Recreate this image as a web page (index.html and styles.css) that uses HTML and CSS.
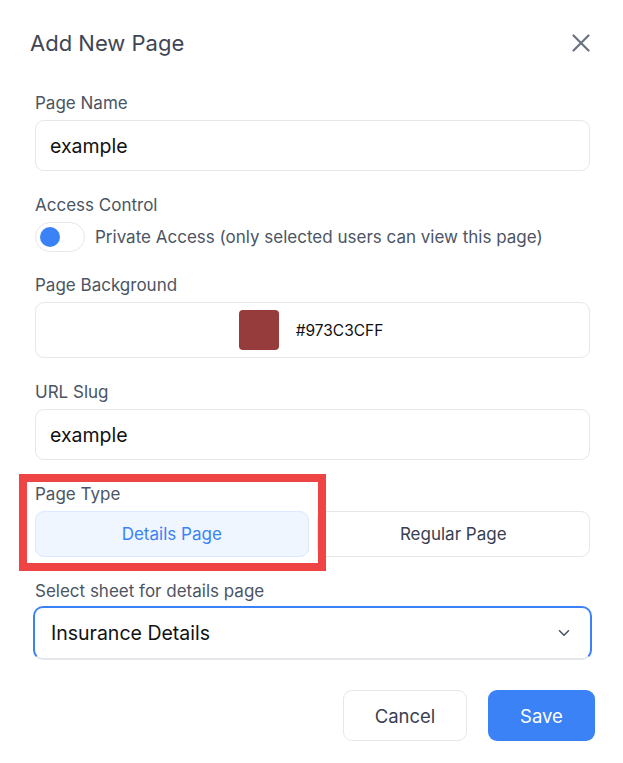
FILE: index.html
```html
<!DOCTYPE html>
<html lang="en">
<head>
<meta charset="utf-8">
<title>Add New Page</title>
<link rel="stylesheet" href="styles.css">
</head>
<body>
<div class="dialog">
  <div class="header">
    <h2 class="title">Add New Page</h2>
    <button class="close" aria-label="Close">
      <svg width="18" height="18" viewBox="0 0 18 18" fill="none" stroke="#6b7280" stroke-width="2.2" stroke-linecap="round"><path d="M1.5 1.5L16.5 16.5M16.5 1.5L1.5 16.5"/></svg>
    </button>
  </div>
  <div class="body">
    <div class="field">
      <label class="label">Page Name</label>
      <div class="input">example</div>
    </div>
    <div class="field">
      <label class="label">Access Control</label>
      <div class="toggle-row">
        <span class="toggle"><span class="knob"></span></span>
        <span class="toggle-text">Private Access (only selected users can view this page)</span>
      </div>
    </div>
    <div class="field field-bg">
      <label class="label">Page Background</label>
      <div class="color-box">
        <span class="swatch"></span>
        <span class="hex">#973C3CFF</span>
      </div>
    </div>
    <div class="field">
      <label class="label">URL Slug</label>
      <div class="input">example</div>
    </div>
    <div class="field">
      <label class="label">Page Type</label>
      <div class="segmented">
        <div class="seg seg-active">Details Page</div>
        <div class="seg">Regular Page</div>
      </div>
    </div>
    <div class="field">
      <label class="label">Select sheet for details page</label>
      <div class="select">
        <span>Insurance Details</span>
        <svg width="12" height="8" viewBox="0 0 12 8" fill="none" stroke="#4b5563" stroke-width="1.6" stroke-linecap="round" stroke-linejoin="round"><path d="M1.5 1.8L6 6.2L10.5 1.8"/></svg>
      </div>
    </div>
  </div>
  <div class="footer">
    <button class="btn btn-cancel">Cancel</button>
    <button class="btn btn-save">Save</button>
  </div>
  <div class="highlight"></div>
</div>
</body>
</html>
```
FILE: styles.css
```css
* { box-sizing: border-box; }
html, body { margin: 0; padding: 0; background: #ffffff; }
body {
  font-family: Inter, "Liberation Sans", Arial, sans-serif;
  color: #111827;
}
.dialog {
  position: relative;
  width: 623px;
  height: 763px;
  padding: 0 33px 0 33px;
}
.header {
  display: flex;
  align-items: center;
  justify-content: space-between;
  padding: 30px 0 0 0;
  margin-left: -3px;
  height: 56px;
}
.title {
  margin: 0;
  font-size: 22px;
  font-weight: 400;
  color: #3f4654;
  line-height: 26px;
}
.close {
  background: none;
  border: 0;
  padding: 0;
  margin-right: 0;
  width: 18px;
  height: 18px;
  display: flex;
}
.body {
  padding: 35px 0 0 2px;
  display: flex;
  flex-direction: column;
  gap: 22px;
}
.field { display: flex; flex-direction: column; gap: 5px; }
.label {
  font-size: 17px;
  line-height: 24px;
  color: #4b5563;
}
.input {
  height: 51px;
  border: 1px solid #e5e7eb;
  border-radius: 9px;
  padding: 0 14px;
  display: flex;
  align-items: center;
  font-size: 19.5px;
  color: #111111;
}
.toggle-row {
  display: flex;
  align-items: center;
  gap: 10px;
}
.toggle {
  width: 50px;
  height: 30px;
  border: 1px solid #e5e7eb;
  border-radius: 15px;
  display: flex;
  align-items: center;
  padding-left: 4px;
}
.knob {
  width: 20px;
  height: 20px;
  border-radius: 50%;
  background: #3b82f6;
}
.toggle-text {
  font-size: 17px;
  color: #4b5563;
}
.field-bg { margin-top: -1px; }
.color-box {
  height: 56px;
  border: 1px solid #e5e7eb;
  border-radius: 9px;
  display: flex;
  align-items: center;
  justify-content: center;
  gap: 17px;
  padding-right: 3px;
}
.swatch {
  width: 40px;
  height: 40px;
  border-radius: 4px;
  background: #973C3C;
}
.hex {
  font-size: 15.5px;
  color: #111111;
}
.segmented {
  display: flex;
  gap: 8px;
}
.seg {
  flex: 1;
  height: 46px;
  border: 1px solid #e5e7eb;
  border-radius: 9px;
  display: flex;
  align-items: center;
  justify-content: center;
  font-size: 17px;
  color: #374151;
}
.seg-active {
  background: #eff6ff;
  border-color: #dbeafe;
  color: #3b82f6;
}
.select {
  height: 54px;
  margin: -2px -2px 0;
  border: 2px solid #3b82f6;
  border-bottom-color: #e5e7eb;
  border-radius: 10px;
  display: flex;
  align-items: center;
  justify-content: space-between;
  padding: 0 20px 0 16px;
  font-size: 19.5px;
  color: #111111;
}
.footer {
  display: flex;
  justify-content: flex-end;
  gap: 21px;
  margin-top: 30px;
  margin-right: -5px;
}
.btn {
  height: 51px;
  border-radius: 9px;
  font-family: inherit;
  font-size: 18.5px;
  padding: 0;
}
.btn-cancel {
  width: 124px;
  background: #ffffff;
  border: 1px solid #e5e7eb;
  color: #374151;
}
.btn-save {
  width: 107px;
  background: #3b82f6;
  border: 0;
  color: #ffffff;
}
.highlight {
  position: absolute;
  left: 19px;
  top: 474px;
  width: 307px;
  height: 97px;
  border: 8px solid #ef4444;
  pointer-events: none;
}
```
